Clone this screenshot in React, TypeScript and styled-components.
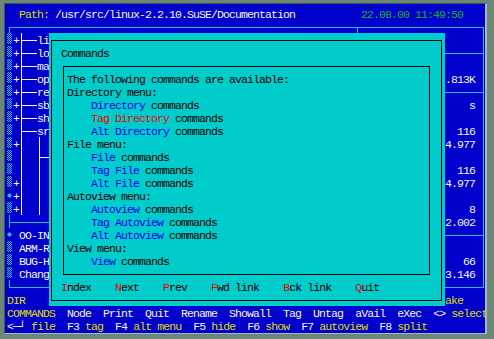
import React from "react";
import styled, { createGlobalStyle, css } from "styled-components";

const C = {
  frame: "#6c8777",
  bevelDark: "#3f574a",
  bevelLight: "#a7bbaf",
  blue: "#0000cc",
  line: "#22bfe6",
  white: "#f4f4f4",
  yellow: "#dede00",
  green: "#18b418",
  cyan: "#00cccc",
  black: "#000000",
  red: "#e80000",
  link: "#0000e8",
};

type Place = { $col: number; $row: number; $w?: number; $h?: number };

const place = ({ $col, $row, $w = 1, $h = 1 }: Place) => css`
  grid-column: ${$col + 1} / span ${$w};
  grid-row: ${$row + 1} / span ${$h};
`;

type Mark = "checker" | "diamond" | "none";
type Guide = "pipe" | "tee" | "ell" | "blank";

// only the part of each name that the help window leaves visible
const treeRows: { mark: Mark; plus: boolean; guides: Guide[]; name: string }[] = [
  { mark: "checker", plus: true, guides: ["tee"], name: "li" },
  { mark: "checker", plus: true, guides: ["tee"], name: "lo" },
  { mark: "checker", plus: true, guides: ["tee"], name: "ma" },
  { mark: "checker", plus: true, guides: ["tee"], name: "op" },
  { mark: "checker", plus: true, guides: ["tee"], name: "re" },
  { mark: "checker", plus: true, guides: ["tee"], name: "sb" },
  { mark: "checker", plus: true, guides: ["tee"], name: "sh" },
  { mark: "checker", plus: false, guides: ["tee"], name: "sr" },
  { mark: "checker", plus: true, guides: ["pipe", "pipe"], name: "" },
  { mark: "checker", plus: false, guides: ["pipe", "tee"], name: "" },
  { mark: "checker", plus: false, guides: ["pipe", "pipe"], name: "" },
  { mark: "checker", plus: true, guides: ["pipe", "pipe"], name: "" },
  { mark: "diamond", plus: true, guides: ["pipe", "pipe"], name: "" },
  { mark: "checker", plus: true, guides: ["pipe", "pipe"], name: "" },
];

const files: { mark: Mark; name: string }[] = [
  { mark: "diamond", name: "OO-IN" },
  { mark: "checker", name: "ARM-R" },
  { mark: "checker", name: "BUG-H" },
  { mark: "checker", name: "Chang" },
];

const stats: { row: number; text: string }[] = [
  { row: 5, text: ".813K" },
  { row: 7, text: "s" },
  { row: 9, text: "116" },
  { row: 10, text: "4.977" },
  { row: 12, text: "116" },
  { row: 13, text: "4.977" },
  { row: 15, text: "8" },
  { row: 16, text: "2.002" },
  { row: 19, text: "66" },
  { row: 20, text: "3.146" },
];

const menus: { title: string; items: { word: string; ink: string }[] }[] = [
  {
    title: "Directory menu:",
    items: [
      { word: "Directory", ink: C.link },
      { word: "Tag Directory", ink: C.red },
      { word: "Alt Directory", ink: C.link },
    ],
  },
  {
    title: "File menu:",
    items: [
      { word: "File", ink: C.link },
      { word: "Tag File", ink: C.link },
      { word: "Alt File", ink: C.link },
    ],
  },
  {
    title: "Autoview menu:",
    items: [
      { word: "Autoview", ink: C.link },
      { word: "Tag Autoview", ink: C.link },
      { word: "Alt Autoview", ink: C.link },
    ],
  },
  { title: "View menu:", items: [{ word: "View", ink: C.link }] },
];

const buttons = ["Index", "Next", "Prev", "Fwd link", "Bck link", "Quit"];

const commands = ["Node", "Print", "Quit", "Rename", "Showall", "Tag", "Untag", "aVail", "eXec"];

const fkeys: [string, string][] = [
  ["<\u2500\u2518", "file"],
  ["F3", "tag"],
  ["F4", "alt menu"],
  ["F5", "hide"],
  ["F6", "show"],
  ["F7", "autoview"],
  ["F8", "split"],
];

const GlobalStyle = createGlobalStyle`
  html, body {
    margin: 0;
    padding: 0;
    background: ${C.frame};
  }
`;

const Window = styled.div`
  width: 494px;
  height: 339px;
  box-sizing: border-box;
  padding: 3px 0 0 4px;
  background: ${C.frame};
`;

const Terminal = styled.div`
  width: 483px;
  height: 331px;
  box-sizing: border-box;
  padding: 3px 0 1px 2px;
  border-style: solid;
  border-width: 1px 2px 1px 1px;
  border-color: ${C.bevelDark} ${C.bevelLight} ${C.bevelLight} ${C.bevelDark};
  background: ${C.blue};
  overflow: hidden;
  display: grid;
  grid-template-columns: repeat(80, 6px);
  grid-template-rows: repeat(25, 13px);
  font-family: "Liberation Mono", "DejaVu Sans Mono", monospace;
  font-size: 11.5px;
  letter-spacing: -0.9px;
  line-height: 15px;
  color: ${C.white};
`;

const Text = styled.div<Place & { $ink?: string; $right?: boolean }>`
  ${place};
  height: 13px;
  white-space: pre;
  color: ${(p) => p.$ink ?? "inherit"};
  text-align: ${(p) => (p.$right ? "right" : "left")};
`;

const Ink = styled.span<{ $c: string }>`
  color: ${(p) => p.$c};
`;

const Rule = styled.div<Place & { $edges: string; $ink: string }>`
  ${place};
  margin: 7px 3px 5px 2px;
  box-sizing: border-box;
  border: 0 solid ${(p) => p.$ink};
  border-top-width: ${(p) => (p.$edges.includes("t") ? 1 : 0)}px;
  border-right-width: ${(p) => (p.$edges.includes("r") ? 1 : 0)}px;
  border-bottom-width: ${(p) => (p.$edges.includes("b") ? 1 : 0)}px;
  border-left-width: ${(p) => (p.$edges.includes("l") ? 1 : 0)}px;
`;

const Pane = styled.div<Place>`
  ${place};
  display: flex;
  flex-direction: column;
`;

const TreeRow = styled.div`
  display: flex;
  height: 13px;
  white-space: pre;
`;

const MarkCell = styled.span`
  flex: 0 0 6px;
  height: 13px;
  background: ${C.blue};
`;

const MarkShape = styled.span<{ $kind: Mark }>`
  display: block;
  ${(p) =>
    p.$kind === "checker" &&
    css`
      width: 5px;
      height: 11px;
      background: repeating-conic-gradient(${C.line} 0 25%, transparent 0 50%) 0 0 / 2px 2px;
    `}
  ${(p) =>
    p.$kind === "diamond" &&
    css`
      width: 5px;
      height: 5px;
      margin-top: 4px;
      background: ${C.line};
      clip-path: polygon(50% 0, 100% 50%, 50% 100%, 0 50%);
    `}
`;

const Cell = styled.span`
  flex: 0 0 6px;
`;

const stroke = (x: string, y: string, w: string, h: string) =>
  `linear-gradient(${C.white}, ${C.white}) ${x} ${y} / ${w} ${h} no-repeat`;

const guideBg: Record<Guide, string> = {
  pipe: stroke("2px", "0", "1px", "100%"),
  tee: `${stroke("2px", "0", "1px", "100%")}, ${stroke("2px", "7px", "16px", "1px")}`,
  ell: `${stroke("2px", "0", "1px", "8px")}, ${stroke("2px", "7px", "16px", "1px")}`,
  blank: "none",
};

const GuideCell = styled.span<{ $kind: Guide }>`
  flex: 0 0 18px;
  height: 13px;
  background: ${(p) => guideBg[p.$kind]};
`;

const Name = styled.span`
  color: ${C.white};
`;

const Dialog = styled.section<Place>`
  ${place};
  z-index: 2;
  background: ${C.cyan};
  color: ${C.black};
  display: grid;
  grid-template-columns: repeat(66, 6px);
  grid-template-rows: repeat(21, 13px);
`;

const HelpLine = styled.div<{ $indent?: boolean }>`
  height: 13px;
  white-space: pre;
  padding-left: ${(p) => (p.$indent ? 24 : 0)}px;
`;

const Bar = styled.div<Place>`
  ${place};
  height: 13px;
  display: flex;
  gap: 24px;
  white-space: pre;
`;

const Hot = styled.span`
  color: ${C.red};
`;

const MenuBar = styled.div<Place>`
  ${place};
  height: 13px;
  display: flex;
  gap: 12px;
  white-space: pre;
`;

const Key = styled.span`
  color: ${C.white};
`;

const Label = styled.span`
  color: ${C.yellow};
`;

const Marker: React.FC<{ kind: Mark }> = ({ kind }) => (
  <MarkCell>
    <MarkShape $kind={kind} />
  </MarkCell>
);

const HelpDialog: React.FC = () => (
  <Dialog $col={7} $row={2} $w={66} $h={21}>
    <Rule $col={0} $row={0} $w={66} $h={21} $edges="tlrb" $ink={C.black} />
    <Text $col={2} $row={1} $w={8}>
      Commands
    </Text>
    <Rule $col={2} $row={2} $w={62} $h={17} $edges="tlrb" $ink={C.black} />
    <Pane $col={3} $row={3} $w={60} $h={15}>
      <HelpLine>The following commands are available:</HelpLine>
      {menus.map((m) => (
        <React.Fragment key={m.title}>
          <HelpLine>{m.title}</HelpLine>
          {m.items.map((it) => (
            <HelpLine key={it.word} $indent>
              <Ink $c={it.ink}>{it.word}</Ink> commands
            </HelpLine>
          ))}
        </React.Fragment>
      ))}
    </Pane>
    <Bar $col={2} $row={19} $w={62}>
      {buttons.map((b) => (
        <span key={b}>
          <Hot>{b[0]}</Hot>
          {b.slice(1)}
        </span>
      ))}
    </Bar>
  </Dialog>
);

const App: React.FC = () => (
  <>
    <GlobalStyle />
    <Window>
      <Terminal>
        <Text $col={2} $row={0} $w={46}>
          <Ink $c={C.yellow}>Path:</Ink> /usr/src/linux-2.2.10.SuSE/Documentation
        </Text>
        <Text $col={59} $row={0} $w={17} $ink={C.green}>
          22.08.00 11:49:50
        </Text>

        <Rule $col={0} $row={1} $w={80} $h={21} $edges="tlrb" $ink={C.line} />
        <Rule $col={58} $row={1} $w={1} $h={21} $edges="l" $ink={C.line} />
        <Rule $col={58} $row={3} $w={22} $edges="t" $ink={C.line} />
        <Rule $col={58} $row={6} $w={22} $edges="t" $ink={C.line} />
        <Rule $col={58} $row={17} $w={22} $edges="t" $ink={C.line} />
        <Rule $col={0} $row={16} $w={59} $edges="t" $ink={C.line} />

        <Pane $col={0} $row={2} $w={7} $h={14}>
          {treeRows.map((r, i) => (
            <TreeRow key={i}>
              <Marker kind={r.mark} />
              <Cell>{r.plus ? "+" : " "}</Cell>
              {r.guides.map((g, j) => (
                <GuideCell key={j} $kind={g} />
              ))}
              <Name>{r.name}</Name>
            </TreeRow>
          ))}
        </Pane>

        <Pane $col={0} $row={17} $w={7} $h={4}>
          {files.map((f) => (
            <TreeRow key={f.name}>
              <Marker kind={f.mark} />
              <Cell> </Cell>
              <Name>{f.name}</Name>
            </TreeRow>
          ))}
        </Pane>

        {stats.map((s) => (
          <Text key={s.row} $col={73} $row={s.row} $w={5} $right>
            {s.text}
          </Text>
        ))}

        <Text $col={0} $row={22} $w={3} $ink={C.yellow}>
          DIR
        </Text>
        <Text $col={73} $row={22} $w={3} $ink={C.yellow}>
          ake
        </Text>

        <MenuBar $col={0} $row={23} $w={80}>
          <Label>COMMANDS</Label>
          {commands.map((c) => (
            <Key key={c}>{c}</Key>
          ))}
          <span>
            <Key>{"<>"}</Key> <Label>select</Label>
          </span>
        </MenuBar>

        <MenuBar $col={0} $row={24} $w={80}>
          {fkeys.map(([k, l]) => (
            <span key={k}>
              <Key>{k}</Key> <Label>{l}</Label>
            </span>
          ))}
        </MenuBar>

        <HelpDialog />
      </Terminal>
    </Window>
  </>
);

export default App;
